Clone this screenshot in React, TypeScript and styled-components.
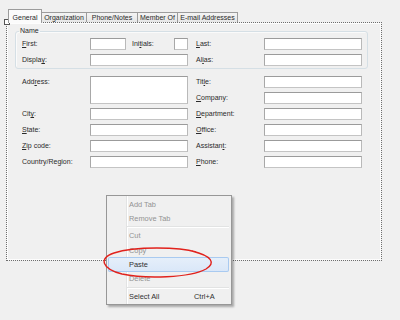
import React from 'react';
import styled, { createGlobalStyle } from 'styled-components';

const GlobalStyle = createGlobalStyle`
  html, body {
    margin: 0;
    padding: 0;
    background: #f0f0f0;
  }
  body {
    font-family: "Liberation Sans", Arial, sans-serif;
    font-size: 7px;
    color: #2a2a2a;
  }
`;

const Page = styled.div`
  position: relative;
  width: 400px;
  height: 320px;
  box-sizing: border-box;
  padding: 9px 0 0 6px;
  overflow: hidden;
  background: #f0f0f0;
`;

const TabStrip = styled.div`
  display: flex;
  align-items: flex-end;
  height: 13px;
  padding-left: 2px;
  position: relative;
  z-index: 1;
`;

const Tab = styled.div<{ $w: number; $selected?: boolean }>`
  box-sizing: border-box;
  width: ${(p) => p.$w}px;
  height: ${(p) => (p.$selected ? 14 : 10)}px;
  margin-bottom: ${(p) => (p.$selected ? -1 : 0)}px;
  margin-left: -1px;
  padding-top: ${(p) => (p.$selected ? 3 : 0)}px;
  border: 1px solid #9c9c9c;
  border-bottom: none;
  background: ${(p) => (p.$selected ? '#fbfbfb' : 'linear-gradient(#f4f4f4, #e6e6e6)')};
  line-height: 9px;
  text-align: center;
  white-space: nowrap;
  position: relative;
  z-index: ${(p) => (p.$selected ? 2 : 1)};
  &:first-child {
    margin-left: 0;
  }
`;

const Panel = styled.div`
  box-sizing: border-box;
  width: 376px;
  height: 239px;
  border: 1px dotted #6e6e6e;
  box-shadow: inset 0 0 0 1px #fdfdfd;
  background: #f0f0f0;
`;

const Handle = styled.div`
  position: absolute;
  left: 4px;
  top: 19px;
  width: 4px;
  height: 4px;
  border: 1px solid #555;
  background: #fff;
`;

const Group = styled.fieldset`
  box-sizing: border-box;
  width: 353px;
  min-width: 0;
  margin: 3px 0 0 8px;
  padding: 2px 5px 2px 6px;
  border: 1px solid #d5dfe5;
  border-radius: 3px;
  box-shadow: inset 1px 1px 0 #fafafa;
`;

const Legend = styled.legend`
  margin-left: -3px;
  padding: 0 1px;
  line-height: 10px;
  color: #2a2a2a;
`;

const Rows = styled.div`
  display: flex;
  flex-direction: column;
  gap: 4px;
`;

const Row = styled.div`
  display: flex;
  height: 12px;
`;

const Half = styled.div<{ $right?: boolean }>`
  display: flex;
  margin-left: ${(p) => (p.$right ? 8 : 0)}px;
`;

const Label = styled.span<{ $w?: number; $pad?: number }>`
  box-sizing: border-box;
  width: ${(p) => p.$w ?? 68}px;
  padding-left: ${(p) => p.$pad ?? 0}px;
  line-height: 12px;
  white-space: nowrap;
`;

const Key = styled.span`
  text-decoration: underline;
`;

const TextBox = styled.div<{ $w?: number; $tall?: boolean }>`
  box-sizing: border-box;
  width: ${(p) => p.$w ?? 98}px;
  height: ${(p) => (p.$tall ? 28 : 12)}px;
  grid-row: ${(p) => (p.$tall ? 'span 2' : 'auto')};
  background: #fff;
  border: 1px solid;
  border-color: #9b9b9b #b9b9b9 #c4c4c4 #a8a8a8;
`;

const Lower = styled.div`
  display: flex;
  margin-top: 7px;
  padding-left: 15px;
`;

const Column = styled.div<{ $right?: boolean }>`
  display: grid;
  grid-template-columns: 68px 98px;
  grid-auto-rows: 12px;
  row-gap: 4px;
  margin-left: ${(p) => (p.$right ? 8 : 0)}px;
`;

const Menu = styled.div`
  position: absolute;
  left: 106px;
  top: 195px;
  width: 126px;
  box-sizing: border-box;
  padding: 1px 2px 1px 1px;
  border: 1px solid #979797;
  background: linear-gradient(
      to right,
      transparent 19px,
      #e2e3e3 19px,
      #e2e3e3 20px,
      #ffffff 20px,
      #ffffff 21px,
      transparent 21px
    ),
    #f0f0f0;
  box-shadow: 2px 2px 2px rgba(0, 0, 0, 0.3);
  font-size: 7.4px;
`;

const MenuItem = styled.div<{ $disabled?: boolean; $active?: boolean }>`
  display: grid;
  grid-template-columns: 65px auto;
  align-items: center;
  height: 14.3px;
  padding-left: 21px;
  color: ${(p) => (p.$disabled ? '#939393' : '#303030')};
  border-radius: 2px;
  background: ${(p) => (p.$active ? 'linear-gradient(#e6effa, #d9e7f8)' : 'transparent')};
  box-shadow: ${(p) => (p.$active ? 'inset 0 0 0 1px #a9caf0' : 'none')};
`;

const Separator = styled.div`
  height: 1px;
  margin: 0.6px 0 0.6px 19px;
  background: #e2e3e3;
  border-bottom: 1px solid #fff;
`;

const Circle = styled.svg`
  position: absolute;
  left: 100px;
  top: 243px;
  overflow: visible;
`;

const tabs = [
  { label: 'General', w: 34, selected: true },
  { label: 'Organization', w: 46 },
  { label: 'Phone/Notes', w: 52 },
  { label: 'Member Of', w: 41 },
  { label: 'E-mail Addresses', w: 61 },
];

const App = () => {
  return (
    <Page>
      <GlobalStyle />
      <TabStrip>
        {tabs.map((t) => (
          <Tab key={t.label} $w={t.w} $selected={t.selected}>
            {t.label}
          </Tab>
        ))}
      </TabStrip>
      <Panel>
        <Group>
          <Legend>Name</Legend>
          <Rows>
            <Row>
              <Half>
                <Label><Key>F</Key>irst:</Label>
                <TextBox $w={36} />
                <Label $w={48} $pad={6}>Ini<Key>t</Key>ials:</Label>
                <TextBox $w={14} />
              </Half>
              <Half $right>
                <Label><Key>L</Key>ast:</Label>
                <TextBox />
              </Half>
            </Row>
            <Row>
              <Half>
                <Label>Displa<Key>y</Key>:</Label>
                <TextBox />
              </Half>
              <Half $right>
                <Label>Al<Key>i</Key>as:</Label>
                <TextBox />
              </Half>
            </Row>
          </Rows>
        </Group>
        <Lower>
          <Column>
            <Label>Add<Key>r</Key>ess:</Label>
            <TextBox $tall />
            <span />
            <Label>Cit<Key>y</Key>:</Label>
            <TextBox />
            <Label><Key>S</Key>tate:</Label>
            <TextBox />
            <Label><Key>Z</Key>ip code:</Label>
            <TextBox />
            <Label>Country/Region:</Label>
            <TextBox />
          </Column>
          <Column $right>
            <Label>Tit<Key>l</Key>e:</Label>
            <TextBox />
            <Label><Key>C</Key>ompany:</Label>
            <TextBox />
            <Label><Key>D</Key>epartment:</Label>
            <TextBox />
            <Label><Key>O</Key>ffice:</Label>
            <TextBox />
            <Label>Assistan<Key>t</Key>:</Label>
            <TextBox />
            <Label><Key>P</Key>hone:</Label>
            <TextBox />
          </Column>
        </Lower>
      </Panel>
      <Handle />
      <Menu>
        <MenuItem $disabled>Add Tab</MenuItem>
        <MenuItem $disabled>Remove Tab</MenuItem>
        <Separator />
        <MenuItem $disabled>Cut</MenuItem>
        <MenuItem $disabled>Copy</MenuItem>
        <MenuItem $active>Paste</MenuItem>
        <MenuItem $disabled>Delete</MenuItem>
        <Separator />
        <MenuItem>
          <span>Select All</span>
          <span>Ctrl+A</span>
        </MenuItem>
      </Menu>
      <Circle width="116" height="38" viewBox="0 0 116 38">
        <path
          d="M96 9 C 80 4, 35 3, 14 10 C -2 15, 2 26, 22 31 C 45 36, 90 35, 106 26 C 116 20, 112 13, 92 8"
          fill="none"
          stroke="#e1221c"
          strokeWidth="1.4"
        />
      </Circle>
    </Page>
  );
};

export default App;
